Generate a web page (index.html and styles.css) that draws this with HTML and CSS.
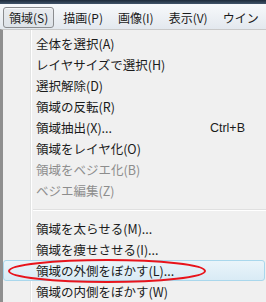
FILE: index.html
```html
<!DOCTYPE html>
<html lang="ja">
<head>
    <meta charset="UTF-8">
    <title>領域メニュー</title>
    <link rel="stylesheet" href="styles.css">
</head>
<body>
    <div class="title-strip"></div>

    <div class="menubar">
        <span class="menubar-item active">領域(S)</span>
        <span class="menubar-item">描画(P)</span>
        <span class="menubar-item">画像(I)</span>
        <span class="menubar-item">表示(V)</span>
        <span class="menubar-item">ウイン</span>
    </div>

    <div class="menu">
        <div class="menu-item"><span class="label">全体を選択(A)</span></div>
        <div class="menu-item"><span class="label">レイヤサイズで選択(H)</span></div>
        <div class="menu-item"><span class="label">選択解除(D)</span></div>
        <div class="menu-item"><span class="label">領域の反転(R)</span></div>
        <div class="menu-item"><span class="label">領域抽出(X)...</span><span class="shortcut">Ctrl+B</span></div>
        <div class="menu-item"><span class="label">領域をレイヤ化(O)</span></div>
        <div class="menu-item disabled"><span class="label">領域をベジエ化(B)</span></div>
        <div class="menu-item disabled"><span class="label">ベジエ編集(Z)</span></div>
        <div class="separator"></div>
        <div class="menu-item"><span class="label">領域を太らせる(M)...</span></div>
        <div class="menu-item"><span class="label">領域を痩せさせる(I)...</span></div>
        <div class="menu-item hover">
            <span class="label">領域の外側をぼかす(L)...</span>
            <!-- red marker drawn over the item -->
            <svg class="mark" width="200" height="26" viewBox="0 0 200 26">
                <ellipse cx="100" cy="13" rx="98" ry="11" fill="none" stroke="#e8141c" stroke-width="2"/>
            </svg>
        </div>
        <div class="menu-item"><span class="label">領域の内側をぼかす(W)</span></div>
    </div>
</body>
</html>
```

FILE: styles.css
```css
body {
    margin: 0;
    padding: 0;
    width: 266px;
    height: 302px;
    overflow: hidden;
    font-family: "Noto Sans CJK JP", "Noto Sans", sans-serif;
    font-size: 12.5px;
    color: #1b1b1b;
    background-color: #f0f0f0;
}

.title-strip {
    height: 4px;
    background: linear-gradient(#1d2a3a, #41546a);
}

.menubar {
    height: 25px;
    display: flex;
    align-items: center;
    padding-left: 3px;
    padding-top: 2px;
    box-sizing: border-box;
    overflow: hidden;
    font-size: 12px;
    background: linear-gradient(#f7f9fb, #e3e8ee);
}

.menubar-item {
    flex-shrink: 0;
    white-space: nowrap;
    height: 21px;
    line-height: 20px;
    padding: 0 5px;
    margin-right: 3px;
    border: 1px solid transparent;
    border-radius: 3px;
    box-sizing: border-box;
}

.menubar-item.active {
    border-color: #8a8c8f;
    background: linear-gradient(#e9ecef, #dde2e8);
    box-shadow: inset 0 1px 0 #f8f9fa;
}

.menubar-item:last-child {
    margin-right: 0;
    padding-right: 0;
}

.menu {
    position: relative;
    border-left: 3px solid #8f8f8f;
    border-top: 1px solid #c9c9c9;
    padding-top: 3px;
    background-color: #f0f0f0;
    background-image: linear-gradient(to right, transparent 27px, #e2e3e3 27px, #e2e3e3 28px, #ffffff 28px, #ffffff 29px, transparent 29px);
}

.menu-item {
    position: relative;
    height: 21px;
    display: flex;
    align-items: center;
    padding-left: 33px;
    white-space: nowrap;
    box-sizing: border-box;
}

.menu-item .label {
    flex: 1;
}

.menu-item .shortcut {
    font-family: "Liberation Sans", "Noto Sans", sans-serif;
    font-size: 12.5px;
    margin-right: 21px;
}

.menu-item.disabled {
    color: #8d8d8d;
}

.menu-item.hover {
    border: 1px solid #a9d7ec;
    border-radius: 3px;
    margin-right: 1px;
    padding-left: 32px;
    background: linear-gradient(#eaf4fa, #d9ebf5);
}

.mark {
    position: absolute;
    left: 3px;
    top: -3px;
}

.separator {
    height: 17px;
    margin-left: 30px;
    background: linear-gradient(transparent 8px, #e0e0e0 8px, #e0e0e0 9px, #ffffff 9px, #ffffff 10px, transparent 10px);
}
```
